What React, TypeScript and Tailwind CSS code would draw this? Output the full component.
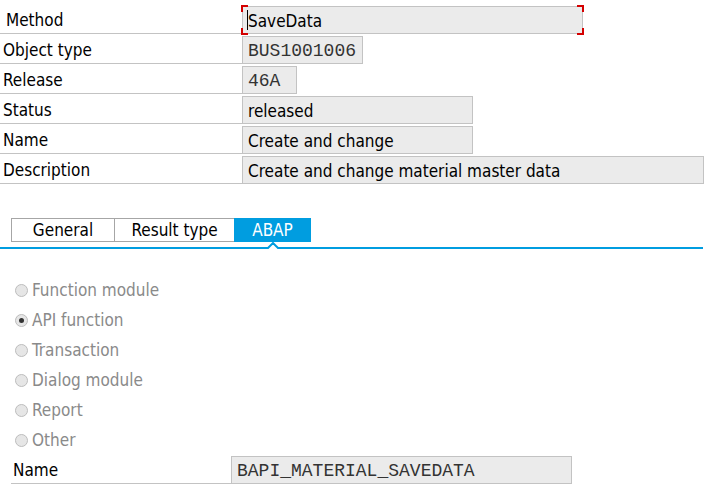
import { useState } from "react"

interface FieldRow {
  label: string
  value: string
  width: string
  mono?: boolean
  focus?: boolean
  indent?: string
}

const header: FieldRow[] = [
  { label: "Method", value: "SaveData", width: "w-[341px]", focus: true, indent: "pl-[6px]" },
  { label: "Object type", value: "BUS1001006", width: "w-[121px]", mono: true },
  { label: "Release", value: "46A", width: "w-[55px]", mono: true },
  { label: "Status", value: "released", width: "w-[231px]" },
  { label: "Name", value: "Create and change", width: "w-[231px]" },
  { label: "Description", value: "Create and change material master data", width: "w-[462px]" },
]

const kinds = ["Function module", "API function", "Transaction", "Dialog module", "Report", "Other"]

const tabs = [
  { name: "General", width: "w-[103px]" },
  { name: "Result type", width: "w-[120px]" },
  { name: "ABAP", width: "w-[77px]" },
]

const sans = "font-['DejaVu_Sans_Condensed','DejaVu_Sans',sans-serif]"
const mono = "font-['Liberation_Mono','Courier_New',monospace]"

function Corner({ pos }: { pos: string }) {
  return <span className={`absolute h-[7px] w-[7px] border-[#d40000] ${pos}`} />
}

function Field({ row }: { row: FieldRow }) {
  return (
    <div
      className={`relative mt-[2px] flex h-[28px] items-center border border-[#c3c3c3] bg-[#ebebeb] pl-[5px] pt-[2px] ${row.width} ${
        row.mono ? `${mono} text-[18px] text-[#333]` : "text-[17px] text-black"
      }`}
    >
      {row.focus && (
        <>
          <span className="absolute left-[4px] top-[3px] h-[20px] w-px bg-black" />
          <Corner pos="-left-[2px] -top-[2px] border-l-2 border-t-2" />
          <Corner pos="-left-[2px] -bottom-[2px] border-l-2 border-b-2" />
          <Corner pos="-right-[2px] -top-[2px] border-r-2 border-t-2" />
          <Corner pos="-right-[2px] -bottom-[2px] border-r-2 border-b-2" />
        </>
      )}
      <span className="leading-none">{row.value}</span>
    </div>
  )
}

function Radio({ checked }: { checked: boolean }) {
  return (
    <span className="flex h-[13px] w-[13px] items-center justify-center rounded-full border border-[#bdbdbd] bg-[#e6e6e6]">
      {checked && <span className="h-[5px] w-[5px] rounded-full bg-[#333]" />}
    </span>
  )
}

export default function App() {
  const [active] = useState("ABAP")
  const [selected] = useState("API function")

  return (
    <div className={`h-[501px] w-[725px] overflow-hidden bg-white pt-[4px] ${sans}`}>
      {header.map((row) => (
        <div key={row.label} className="flex h-[30px]">
          <div
            className={`flex w-[242px] shrink-0 items-center border-b border-[#c3c3c3] pt-[4px] text-[17px] text-black ${
              row.indent ?? "pl-[3px]"
            }`}
          >
            {row.label}
          </div>
          <Field row={row} />
        </div>
      ))}

      <div className="ml-[11px] mt-[34px] flex h-[24px]">
        {tabs.map((tab) => (
          <div
            key={tab.name}
            className={`flex items-center justify-center pt-[1px] text-[17px] ${tab.width} ${
              tab.name === active
                ? "bg-[#009de0] text-white"
                : "border border-r-0 border-[#a6a6a6] text-black"
            }`}
          >
            {tab.name}
          </div>
        ))}
      </div>
      <svg width="703" height="8" className="block">
        <polyline
          points="0,6 268,6 273,1 278,6 703,6"
          fill="white"
          stroke="#009de0"
          strokeWidth="2"
        />
      </svg>

      <div className="mt-[25px]">
        {kinds.map((kind) => (
          <div key={kind} className="flex h-[30px] items-center gap-[4px] pl-[15px] text-[17px] text-[#8a8a8a]">
            <Radio checked={kind === selected} />
            <span className="pt-[1px]">{kind}</span>
          </div>
        ))}
      </div>

      <div className="ml-[11px] flex h-[29px]">
        <div className="flex w-[220px] items-center border-b border-[#c3c3c3] pl-[2px] pt-[3px] text-[17px] text-black">
          Name
        </div>
        <div
          className={`mt-[1px] flex h-[28px] w-[341px] items-center border border-[#c3c3c3] bg-[#ebebeb] pl-[5px] pt-[2px] text-[18px] text-[#333] ${mono}`}
        >
          BAPI_MATERIAL_SAVEDATA
        </div>
      </div>
    </div>
  )
}
